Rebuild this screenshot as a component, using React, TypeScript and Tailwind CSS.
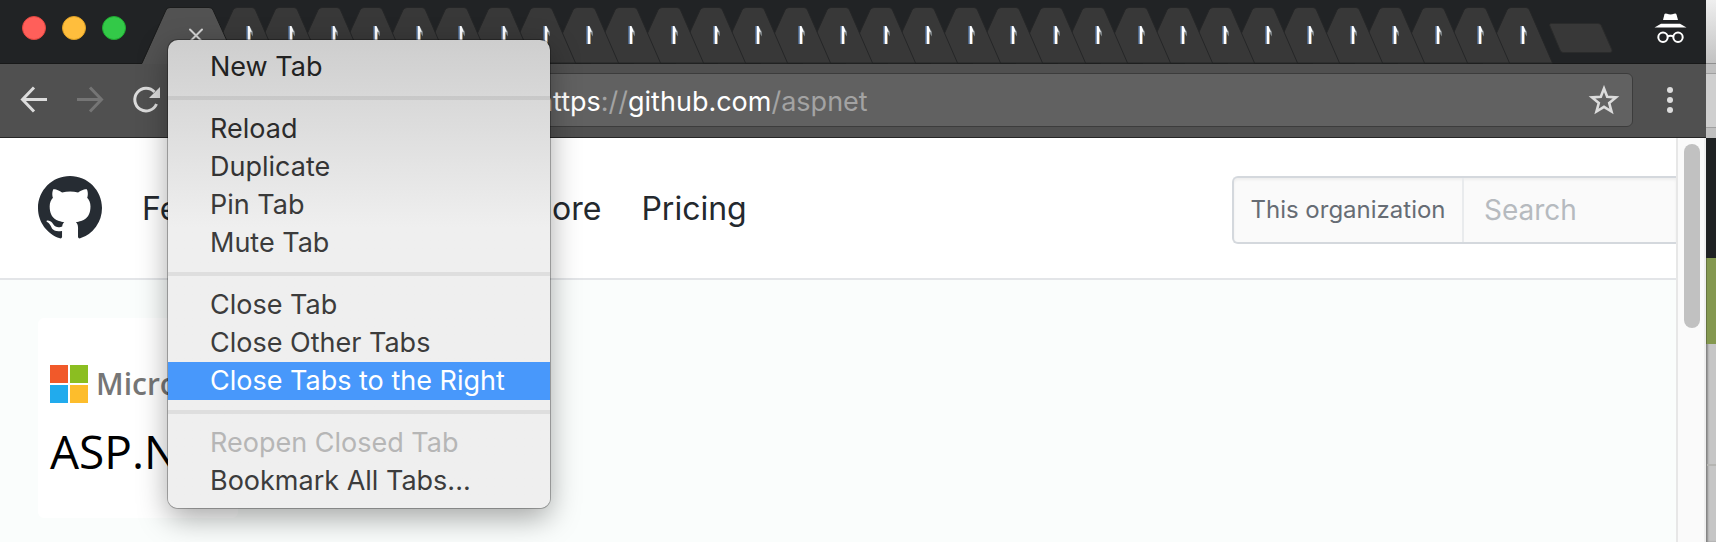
import React from "react";

const TAB_COUNT = 31;

const menuGroups: { label: string; state?: "active" | "disabled"; tone: string }[][] = [
  [{ label: "New Tab", tone: "text-[#222222]" }],
  [
    { label: "Reload", tone: "text-[#2c2c2c]" },
    { label: "Duplicate", tone: "text-[#343434]" },
    { label: "Pin Tab", tone: "text-[#3a3a3a]" },
    { label: "Mute Tab", tone: "text-[#3c3c3c]" },
  ],
  [
    { label: "Close Tab", tone: "text-[#3c3c3c]" },
    { label: "Close Other Tabs", tone: "text-[#3c3c3c]" },
    { label: "Close Tabs to the Right", state: "active", tone: "bg-[#4898fb] text-white" },
  ],
  [
    { label: "Reopen Closed Tab", state: "disabled", tone: "text-[#b6b6b6]" },
    { label: "Bookmark All Tabs...", tone: "text-[#3c3c3c]" },
  ],
];

// Each tab is stacked above its right-hand neighbour.
function BackgroundTab({ stack }: { stack: number }) {
  return (
    <button aria-label="Background tab" className="relative block h-14 min-w-0 flex-1" style={{ zIndex: stack }}>
      <svg width="69" height="56" viewBox="0 0 69 56" className="block max-w-none overflow-visible">
        <path
          d="M-1 56 L23 3 Q24.500 .5 27 .5 H42 Q44.500 .5 45.500 3 L68.500 56 Z"
          fill="#383838"
          stroke="#252627"
          strokeWidth="1"
        />
        <path d="M39.500 19 L43 25 L43 29.500 L40 25.500 Z" fill="#7b8184" />
        <path d="M37.500 19 H39.500 L42 25.500 L40.300 24.500 V37 H37.500 Z" fill="#fff" />
        <path d="M37 19 V37" stroke="#5f8fd0" strokeWidth="1" />
        <path d="M40.500 26 V37" stroke="#c9a26a" strokeOpacity=".6" strokeWidth="1" />
      </svg>
    </button>
  );
}

function TabStrip() {
  return (
    <div className="flex h-16 items-end border-b border-[#181919] bg-[#212325]">
      <div className="flex h-14 w-[142px] shrink-0 items-start gap-4 pt-[9px] pl-[22px]">
        <button aria-label="Close window" className="size-6 rounded-full border border-[#e2463f] bg-[#ff5f5a]" />
        <button aria-label="Minimize window" className="size-6 rounded-full border border-[#dfa023] bg-[#ffbe3d]" />
        <button aria-label="Zoom window" className="size-6 rounded-full border border-[#1faa30] bg-[#33c948]" />
      </div>
      <div className="z-10 -mb-px h-[57px] w-[68px] shrink-0">
        <svg width="96" height="57" viewBox="0 0 96 57" className="block max-w-none" aria-label="Active tab">
          <path d="M0 57 L24 3 Q25 .5 28 .5 H67 Q70 .5 71 3 L96 57 Z" fill="#525252" />
          <path d="M0 56 L24 3 Q25 .5 28 .5 H67 Q70 .5 71 3 L95 56" fill="none" stroke="#1b1c1c" />
          <path d="M48 22.500 L60 34.500 M60 22.500 L48 34.500" stroke="#d4d4d4" strokeWidth="2" strokeLinecap="round" />
        </svg>
      </div>
      <div className="isolate flex h-14 min-w-0 flex-1">
        {Array.from({ length: TAB_COUNT }, (_, i) => (
          <BackgroundTab key={i} stack={TAB_COUNT - i} />
        ))}
      </div>
      <div className="flex h-14 w-[180px] shrink-0 items-start justify-between pr-[19px] pl-[23px]">
        <button aria-label="New tab" className="pt-4">
          <svg width="64" height="30" viewBox="0 0 64 30" className="block">
            <path d="M2 .5 H49 Q51 .5 52 2 L63 27 Q63.500 29.500 61 29.500 H14 Q12 29.500 11 27 L.5 2 Q.5 .5 2 .5Z" fill="#383838" stroke="#2a2b2b" />
          </svg>
        </button>
        <svg width="33" height="31" viewBox="0 0 33 31" className="mt-[6px] block" role="img" aria-label="Incognito">
          <path d="M10.500 1 Q11.500 0 13 .8 Q16.500 2 20 .8 Q22 0 22.500 1.500 L24 7 H9 Z" fill="#fff" />
          <path d="M7 10.800 H26 L32.500 14.500 H.5 Z" fill="#fff" />
          <circle cx="9" cy="24.300" r="4.700" fill="none" stroke="#fff" strokeWidth="2" />
          <circle cx="24" cy="24.300" r="4.700" fill="none" stroke="#fff" strokeWidth="2" />
          <path d="M13 23.500 Q16.500 22 20 23.500" fill="none" stroke="#fff" strokeWidth="2" />
        </svg>
      </div>
    </div>
  );
}

function Toolbar() {
  return (
    <div className="flex h-[74px] items-center border-b border-[#262626] bg-[#505050] pb-px">
      <div className="flex w-[168px] shrink-0 items-center gap-7 pl-5">
        <button aria-label="Back">
          <svg width="28" height="28" viewBox="0 0 28 28" fill="none" stroke="#dcdcdc" strokeWidth="3" className="block">
            <path d="M27 13.500 H3 M14 1.500 L2.500 13.500 L14 25.500" />
          </svg>
        </button>
        <button aria-label="Forward" disabled>
          <svg width="28" height="28" viewBox="0 0 28 28" fill="none" stroke="#757575" strokeWidth="3" className="block">
            <path d="M1 13.500 H25 M14 1.500 L25.500 13.500 L14 25.500" />
          </svg>
        </button>
        <button aria-label="Reload page">
          <svg width="28" height="28" viewBox="0 0 28 28" className="block">
            <path d="M22.500 6 A11.300 11.300 0 1 0 24.500 18" fill="none" stroke="#dcdcdc" strokeWidth="3" />
            <path d="M28 1 V12 H17 Z" fill="#dcdcdc" />
          </svg>
        </button>
      </div>
      <form className="flex h-[54px] min-w-0 flex-1 items-center rounded-md border border-[#3c3c3c] bg-[#616161] pr-3">
        <div role="textbox" aria-label="Address" className="min-w-0 flex-1 pt-1 pl-[368px] text-[27px] text-[#a3a3a3]">
          <span className="text-white">https</span>://<span className="text-white">github.com</span>/aspnet
        </div>
        <button type="button" aria-label="Bookmark this page">
          <svg width="32" height="30" viewBox="0 0 32 30" className="block">
            <path d="M16 3.500 L19.200 11.800 L28 12.400 L21.200 18 L23.500 26.500 L16 21.800 L8.500 26.500 L10.800 18 L4 12.400 L12.800 11.800 Z" fill="none" stroke="#dcdcdc" strokeWidth="2.600" />
          </svg>
        </button>
      </form>
      <button aria-label="Browser menu" className="flex w-[73px] shrink-0 flex-col items-center gap-1">
        <span className="size-[6px] rounded-full bg-[#dcdcdc]" />
        <span className="size-[6px] rounded-full bg-[#dcdcdc]" />
        <span className="size-[6px] rounded-full bg-[#dcdcdc]" />
      </button>
    </div>
  );
}

function SiteHeader() {
  return (
    <header className="flex h-[142px] items-center border-b-2 border-[#e3e5e8] bg-white pt-1 pl-[38px]">
      <a href="#home" aria-label="GitHub" className="pb-1">
        <svg width="64" height="64" viewBox="0 0 16 16" fill="#262c33" className="block">
          <path d="M8 0C3.580 0 0 3.580 0 8c0 3.540 2.290 6.530 5.470 7.590.4.070.55-.17.55-.38 0-.19-.01-.82-.01-1.490-2.010.37-2.530-.49-2.690-.94-.09-.23-.48-.94-.82-1.130-.28-.15-.68-.52-.01-.53.63-.01 1.080.58 1.230.82.72 1.210 1.870.87 2.330.66.070-.52.28-.87.51-1.070-1.780-.2-3.640-.89-3.640-3.950 0-.87.31-1.590.82-2.150-.08-.2-.36-1.020.08-2.120 0 0 .67-.21 2.200.82.640-.18 1.320-.27 2-.27s1.360.09 2 .27c1.530-1.040 2.200-.82 2.200-.82.44 1.100.16 1.920.08 2.120.51.56.82 1.270.82 2.150 0 3.070-1.870 3.750-3.650 3.950.29.25.54.73.54 1.480 0 1.070-.01 1.930-.01 2.200 0 .21.15.46.55.38A8.010 8.010 0 0 0 16 8c0-4.420-3.580-8-8-8z" />
        </svg>
      </a>
      <nav className="flex flex-1 gap-10 pb-[2px] pl-10 text-[32px] text-[#24292e]">
        <a href="#features" className="w-[132px]">Features</a>
        <a href="#business" className="w-[134px]">Business</a>
        <a href="#explore">Explore</a>
        <a href="#pricing">Pricing</a>
      </nav>
      <form className="flex h-[68px] w-[444px] shrink-0 items-center rounded-l-md border-2 border-r-0 border-[#d4d8dd] bg-[#fafafa] shadow-[inset_0_2px_3px_rgba(0,0,0,0.05)]">
        <label htmlFor="site-search" className="flex h-16 w-[230px] shrink-0 items-center justify-center border-r-2 border-[#e9ebed] text-[24px] text-[#666c74]">
          This organization
        </label>
        <input
          id="site-search"
          placeholder="Search"
          className="h-16 min-w-0 flex-1 pl-5 text-[28px] outline-none placeholder:text-[#b6babf]"
        />
      </form>
    </header>
  );
}

function OrganizationLogo() {
  return (
    <div className="h-[200px] w-[200px] overflow-hidden rounded-md bg-white pt-[47px] pl-3 whitespace-nowrap">
      <div className="flex items-center gap-2">
        <div className="grid grid-cols-2 gap-[2px]">
          <span className="size-[18px] bg-[#f1592a]" />
          <span className="size-[18px] bg-[#8bbe21]" />
          <span className="size-[18px] bg-[#21abed]" />
          <span className="size-[18px] bg-[#fdbd2c]" />
        </div>
        <span className="font-['Open_Sans',sans-serif] text-[30px] leading-[38px] font-semibold text-[#767676]">Microsoft</span>
      </div>
      <p className="mt-5 font-['Open_Sans',sans-serif] text-[46px] leading-[56px] text-black">ASP.NET</p>
    </div>
  );
}

function ContextMenu() {
  return (
    <div
      role="menu"
      className="absolute top-10 left-[168px] z-20 w-[382px] rounded-[10px] bg-linear-to-b from-[#cecece] from-0% via-[#efefef] via-40% to-[#efefef] py-2 text-[27px] shadow-[0_0_0_1px_rgba(0,0,0,0.28),0_10px_30px_rgba(0,0,0,0.35)]"
    >
      {menuGroups.map((group, g) => (
        <React.Fragment key={g}>
          {g > 0 && <div role="separator" className="my-[10px] h-1 bg-black/7" />}
          {group.map((item) => (
            <button
              key={item.label}
              role="menuitem"
              disabled={item.state === "disabled"}
              className={`block h-[38px] w-full pl-[42px] text-left leading-[36px] ${item.tone}`}
            >
              {item.label}
            </button>
          ))}
        </React.Fragment>
      ))}
    </div>
  );
}

function WindowBehind() {
  return (
    <div className="flex w-[10px] shrink-0 flex-col bg-[#c6c6c6] shadow-[inset_2px_0_2px_rgba(0,0,0,0.3)]">
      <div className="h-16 border-b border-[#8f8f8f] bg-linear-to-b from-[#efefef] to-[#c2c2c2]" />
      <div className="h-[10px] border-b border-[#a0a0a0] bg-[#bfbfbf]" />
      <div className="h-[54px] border-b border-[#a0a0a0] bg-[#cfcfcf]" />
      <div className="h-[10px] bg-[#bfbfbf]" />
      <div className="h-[120px] bg-[#1f2223]" />
      <div className="h-[86px] border-l border-[#657340] bg-[#84984f]" />
      <div className="flex-1 border-l border-[#858585]">
        <div className="h-[122px] border-b-2 border-[#b5b5b2]" />
      </div>
    </div>
  );
}

export default function App() {
  return (
    <div className="relative flex min-h-screen overflow-hidden font-['Inter',sans-serif]">
      <div className="flex min-w-0 flex-1 flex-col">
        <TabStrip />
        <Toolbar />
        <div className="flex flex-1">
          <main className="flex min-w-0 flex-1 flex-col bg-[#fafdfc]">
            <SiteHeader />
            <section className="flex-1 pt-[38px] pl-[38px]">
              <OrganizationLogo />
            </section>
          </main>
          <div className="w-[30px] shrink-0 border-r-2 border-l-2 border-r-[#efefef] border-l-[#e7e7e7] bg-[#fafafa] pt-[6px] pl-[6px]">
            <div className="h-[184px] w-4 rounded-full bg-[#c1c1c1]" />
          </div>
        </div>
      </div>
      <WindowBehind />
      <ContextMenu />
    </div>
  );
}
